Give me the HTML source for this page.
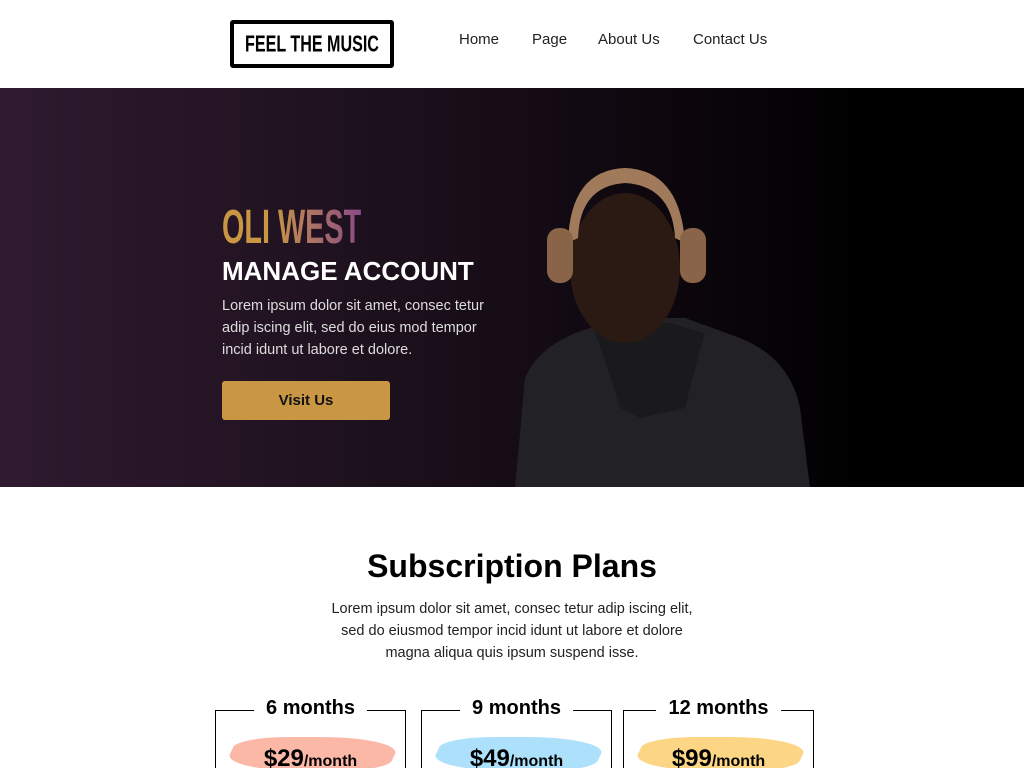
<!DOCTYPE html>
<html><head><meta charset="utf-8"><style>
*{margin:0;padding:0;box-sizing:border-box}
html,body{width:1024px;height:768px;overflow:hidden}
body{background:#fff;font-family:"Liberation Sans",sans-serif;position:relative}
.logo{position:absolute;left:230px;top:20px;width:164px;height:48px;border:4px solid #000;border-radius:3px;overflow:hidden}
.logo span{position:absolute;left:50%;top:50%;white-space:nowrap;font-weight:bold;font-size:23px;transform:translate(-50%,-50%) scaleX(0.7)}
.nav{position:absolute;top:31px;font-size:15px;color:#222}
.hero{position:absolute;left:0;top:88px;width:1024px;height:399px;overflow:hidden;background:linear-gradient(90deg,#2f1a2f 0%,#1e111e 35%,#0d070d 65%,#000 85%)}
.oli{position:absolute;left:222px;top:200px;font-size:48px;font-weight:bold;white-space:nowrap;background:linear-gradient(90deg,#c99644 0%,#c99644 35%,#8a4a88 100%);-webkit-background-clip:text;color:transparent;transform:scaleX(0.6);transform-origin:left}
.man{position:absolute;left:222px;top:256px;color:#fff;font-size:26px;font-weight:bold;white-space:nowrap}
.p{position:absolute;left:222px;top:295px;width:285px;color:#ddd;font-size:14.5px;line-height:22px}
.btn{position:absolute;left:222px;top:381px;width:168px;height:39px;background:#c99644;border-radius:3px;color:#111;font-weight:bold;font-size:15px;display:flex;align-items:center;justify-content:center}
h2{position:absolute;left:0;width:1024px;top:548px;text-align:center;font-size:32px;font-weight:bold}
.sub{position:absolute;left:322px;width:380px;top:598px;text-align:center;font-size:14.5px;line-height:22px;color:#222}
.card{position:absolute;top:710px;width:191px;height:58px;border:1.5px solid #000;border-bottom:none;overflow:visible}
.card .t{position:absolute;top:-14px;left:0;right:0;text-align:center;white-space:nowrap}
.card .t span{background:#fff;padding:0 12px;font-weight:bold;font-size:20px}
.brush{position:absolute;top:26px;left:14px;width:165px;height:34px;border-radius:30% 50% 30% 50%;transform:skewX(-25deg)}
.price{position:absolute;top:34px;left:0;right:0;text-align:center;font-weight:bold;font-size:24px}
.price small{font-size:16px}
</style></head><body>
<div class="logo"><span>FEEL THE MUSIC</span></div>
<div class="nav" style="left:459px">Home</div>
<div class="nav" style="left:532px">Page</div>
<div class="nav" style="left:598px">About Us</div>
<div class="nav" style="left:693px">Contact Us</div>
<div class="hero">
<svg style="position:absolute;left:510px;top:70px" width="305" height="330" viewBox="0 0 305 330">
<path d="M5 330 L15 220 Q30 185 80 170 L115 160 L175 160 L230 180 Q280 200 290 250 L300 330Z" fill="#222226"/>
<path d="M85 175 Q100 215 110 250 L130 260 L175 250 Q185 210 195 175 L160 165 L115 165Z" fill="#1a1a1d"/>
<ellipse cx="115" cy="110" rx="55" ry="75" fill="#2b1a13"/>
<path d="M58 85 Q60 12 115 10 Q170 12 175 85 L165 80 Q162 28 115 25 Q70 28 68 80Z" fill="#a07a5a"/>
<rect x="37" y="70" width="26" height="55" rx="12" fill="#8a6448"/>
<rect x="170" y="70" width="26" height="55" rx="12" fill="#8a6448"/>
</svg>
</div>
<div class="oli">OLI WEST</div>
<div class="man">MANAGE ACCOUNT</div>
<div class="p">Lorem ipsum dolor sit amet, consec tetur adip iscing elit, sed do eius mod tempor incid idunt ut labore et dolore.</div>
<div class="btn">Visit Us</div>
<h2>Subscription Plans</h2>
<div class="sub">Lorem ipsum dolor sit amet, consec tetur adip iscing elit, sed do eiusmod tempor incid idunt ut labore et dolore magna aliqua quis ipsum suspend isse.</div>
<div class="card" style="left:215px"><div class="t"><span>6 months</span></div><div class="brush" style="background:#fbb8a6"></div><div class="price">$29<small>/month</small></div></div>
<div class="card" style="left:421px"><div class="t"><span>9 months</span></div><div class="brush" style="background:#ade0fa"></div><div class="price">$49<small>/month</small></div></div>
<div class="card" style="left:623px"><div class="t"><span>12 months</span></div><div class="brush" style="background:#fcd585"></div><div class="price">$99<small>/month</small></div></div>
</body></html>
